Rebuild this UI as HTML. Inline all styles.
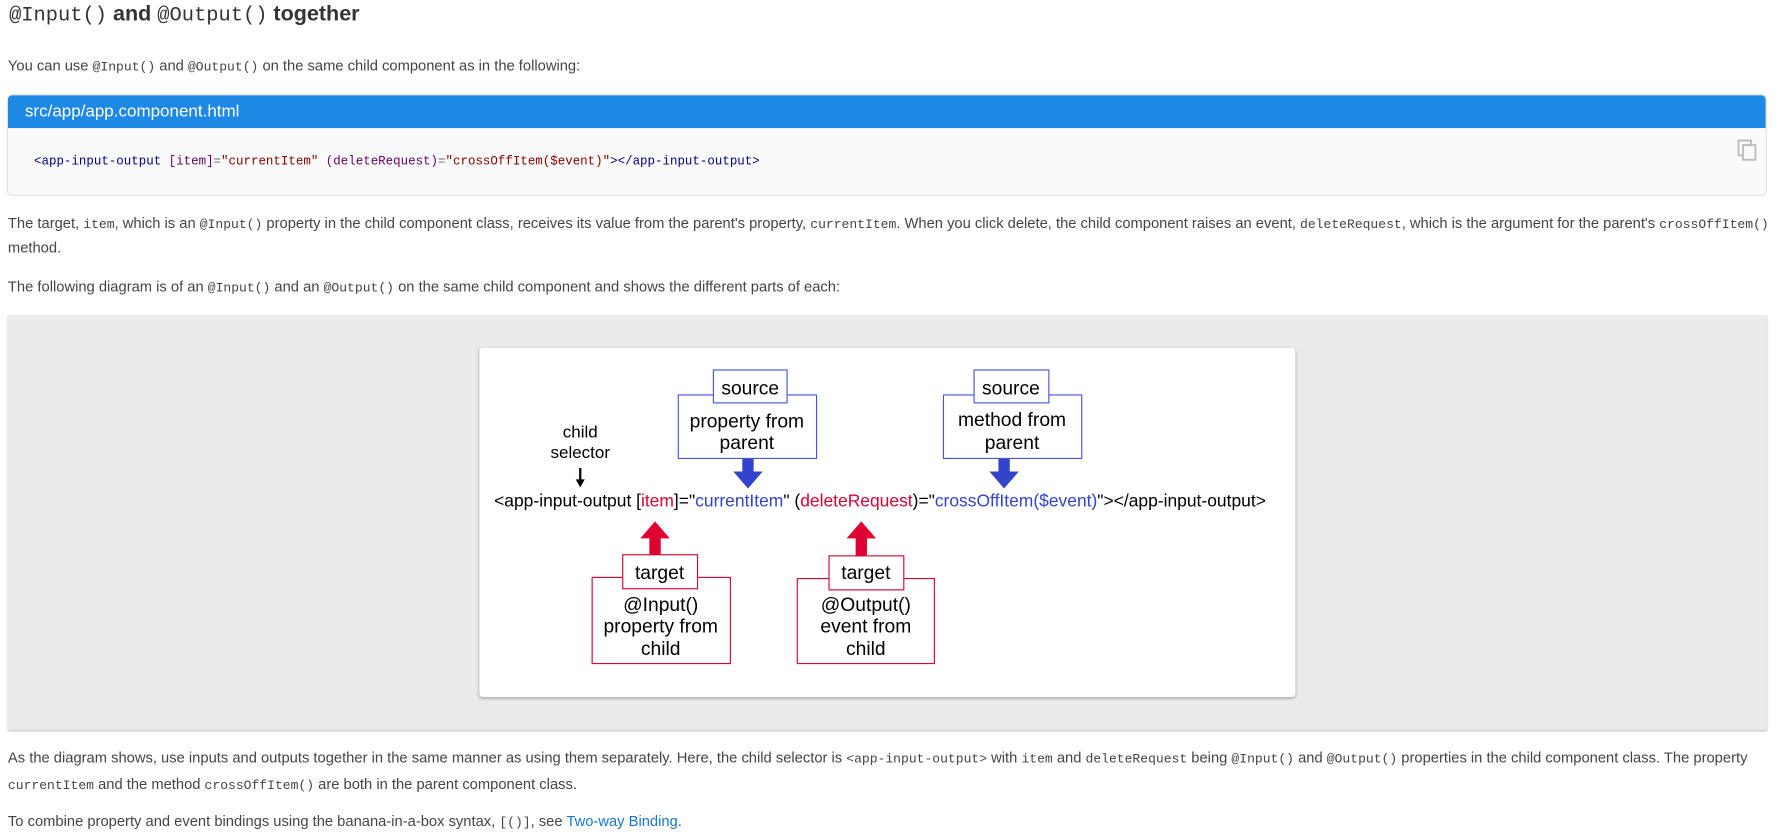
<!DOCTYPE html>
<html><head><meta charset="utf-8"><style>
html,body{margin:0;padding:0}
body{width:1777px;height:832px;background:#fff;font-family:"Liberation Sans",Arial,sans-serif;color:#444;overflow:hidden;position:relative}
#w{position:absolute;left:0;top:0;width:1568px;height:735px;transform:scale(1.1333);transform-origin:0 0}
.a{position:absolute;white-space:nowrap}
code{font-family:"Liberation Mono",monospace;font-size:11.5px;color:#444}
p{margin:0;font-size:13px}
</style></head><body><div id="w">
<div class="a" style="left:8px;top:2px;font-size:19px;font-weight:bold;color:#333"><span style="font-family:'Liberation Mono',monospace;font-weight:normal;font-size:18px">@Input()</span> and <span style="font-family:'Liberation Mono',monospace;font-weight:normal;font-size:18px">@Output()</span> together</div>
<p class="a" style="left:7px;top:50px">You can use <code>@Input()</code> and <code>@Output()</code> on the same child component as in the following:</p>
<div class="a" style="left:7px;top:84px;width:1551px;height:88px;border-radius:4px;background:#fafafa;box-shadow:0 0 0 1px #e4e4e4;overflow:hidden">
 <div style="background:#1e88e5;height:29px;color:#fff;font-size:15px;line-height:30px;padding-left:15px">src/app/app.component.html</div>
 <div style="position:absolute;left:23px;top:53px;font-family:'Liberation Mono',monospace;font-size:11px;color:#000088;white-space:nowrap">&lt;app-input-output <span style="color:#660066">[item]</span><span style="color:#666">=</span><span style="color:#880000">"currentItem"</span> <span style="color:#660066">(deleteRequest)</span><span style="color:#666">=</span><span style="color:#880000">"crossOffItem($event)"</span>&gt;&lt;/app-input-output&gt;</div>
 <svg style="position:absolute;left:1526px;top:39px" width="18" height="20" viewBox="0 0 18 20"><rect x="1" y="1" width="11" height="13" fill="none" stroke="#bbb" stroke-width="1.6"/><rect x="5" y="5" width="11" height="13" fill="#fafafa" stroke="#bbb" stroke-width="1.6"/></svg>
</div>
<p class="a" style="left:7px;top:189px">The target, <code>item</code>, which is an <code>@Input()</code> property in the child component class, receives its value from the parent's property, <code>currentItem</code>. When you click delete, the child component raises an event, <code>deleteRequest</code>, which is the argument for the parent's <code>crossOffItem()</code></p>
<p class="a" style="left:7px;top:211px">method.</p>
<p class="a" style="left:7px;top:245px">The following diagram is of an <code>@Input()</code> and an <code>@Output()</code> on the same child component and shows the different parts of each:</p>
<div class="a" style="left:7px;top:278px;width:1552px;height:366px;background:#ebebeb;box-shadow:0 1px 2px rgba(0,0,0,.25)"></div>
<div class="a" style="left:423px;top:307px;width:720px;height:308px;background:#fff;border-radius:3px;box-shadow:0 1px 3px rgba(0,0,0,.3)"></div>
<svg class="a" style="left:0;top:0" width="1568" height="735" font-family="Liberation Sans,Arial,sans-serif">
 <g font-size="15" fill="#000" text-anchor="middle">
  <text x="512" y="386">child</text><text x="512" y="404">selector</text>
 </g>
 <path d="M511 413v10h-3l4 7 4-7h-3v-10z" fill="#000"/>
 <g fill="#fff" stroke="#4455dd" stroke-width="1">
  <rect x="598.5" y="348.5" width="122" height="56"/><rect x="629.5" y="326.5" width="65" height="29"/>
  <rect x="832.5" y="348.5" width="122" height="56"/><rect x="859.5" y="326.5" width="66" height="29"/>
 </g>
 <g font-size="17" fill="#000" text-anchor="middle">
  <text x="662" y="348">source</text><text x="659" y="377">property from</text><text x="659" y="396">parent</text>
  <text x="892" y="348">source</text><text x="893" y="376">method from</text><text x="893" y="396">parent</text>
 </g>
 <path d="M655 405h10v11h8l-13 15-13-15h8z" fill="#3344cc"/>
 <path d="M881 405h10v11h8l-13 15-13-15h8z" fill="#3344cc"/>
 <text x="436" y="447" font-size="15.5" fill="#000" textLength="681" lengthAdjust="spacingAndGlyphs">&lt;app-input-output [<tspan fill="#dd0031">item</tspan>]="<tspan fill="#3344cc">currentItem</tspan>" (<tspan fill="#dd0031">deleteRequest</tspan>)="<tspan fill="#3344cc">crossOffItem($event)</tspan>"&gt;&lt;/app-input-output&gt;</text>
 <path d="M573 491v-16h-8l13-15 13 15h-8v16z" fill="#dd0031"/>
 <path d="M755 491v-16h-8l13-15 13 15h-8v16z" fill="#dd0031"/>
 <g fill="#fff" stroke="#dd0031" stroke-width="1">
  <rect x="522.5" y="509.5" width="122" height="76"/><rect x="549.5" y="489.5" width="66" height="30"/>
  <rect x="703.5" y="510.5" width="121" height="75"/><rect x="731.5" y="490.5" width="66" height="30"/>
 </g>
 <g font-size="17" fill="#000" text-anchor="middle">
  <text x="582" y="511">target</text><text x="583" y="539">@Input()</text><text x="583" y="558">property from</text><text x="583" y="578">child</text>
  <text x="764" y="511">target</text><text x="764" y="539">@Output()</text><text x="764" y="558">event from</text><text x="764" y="578">child</text>
 </g>
</svg>
<p class="a" style="left:7px;top:661px">As the diagram shows, use inputs and outputs together in the same manner as using them separately. Here, the child selector is <code>&lt;app-input-output&gt;</code> with <code>item</code> and <code>deleteRequest</code> being <code>@Input()</code> and <code>@Output()</code> properties in the child component class. The property</p>
<p class="a" style="left:7px;top:684px"><code>currentItem</code> and the method <code>crossOffItem()</code> are both in the parent component class.</p>
<p class="a" style="left:7px;top:717px">To combine property and event bindings using the banana-in-a-box syntax, <code>[()]</code>, see <span style="color:#1976d2">Two-way Binding</span>.</p>
</div></body></html>
